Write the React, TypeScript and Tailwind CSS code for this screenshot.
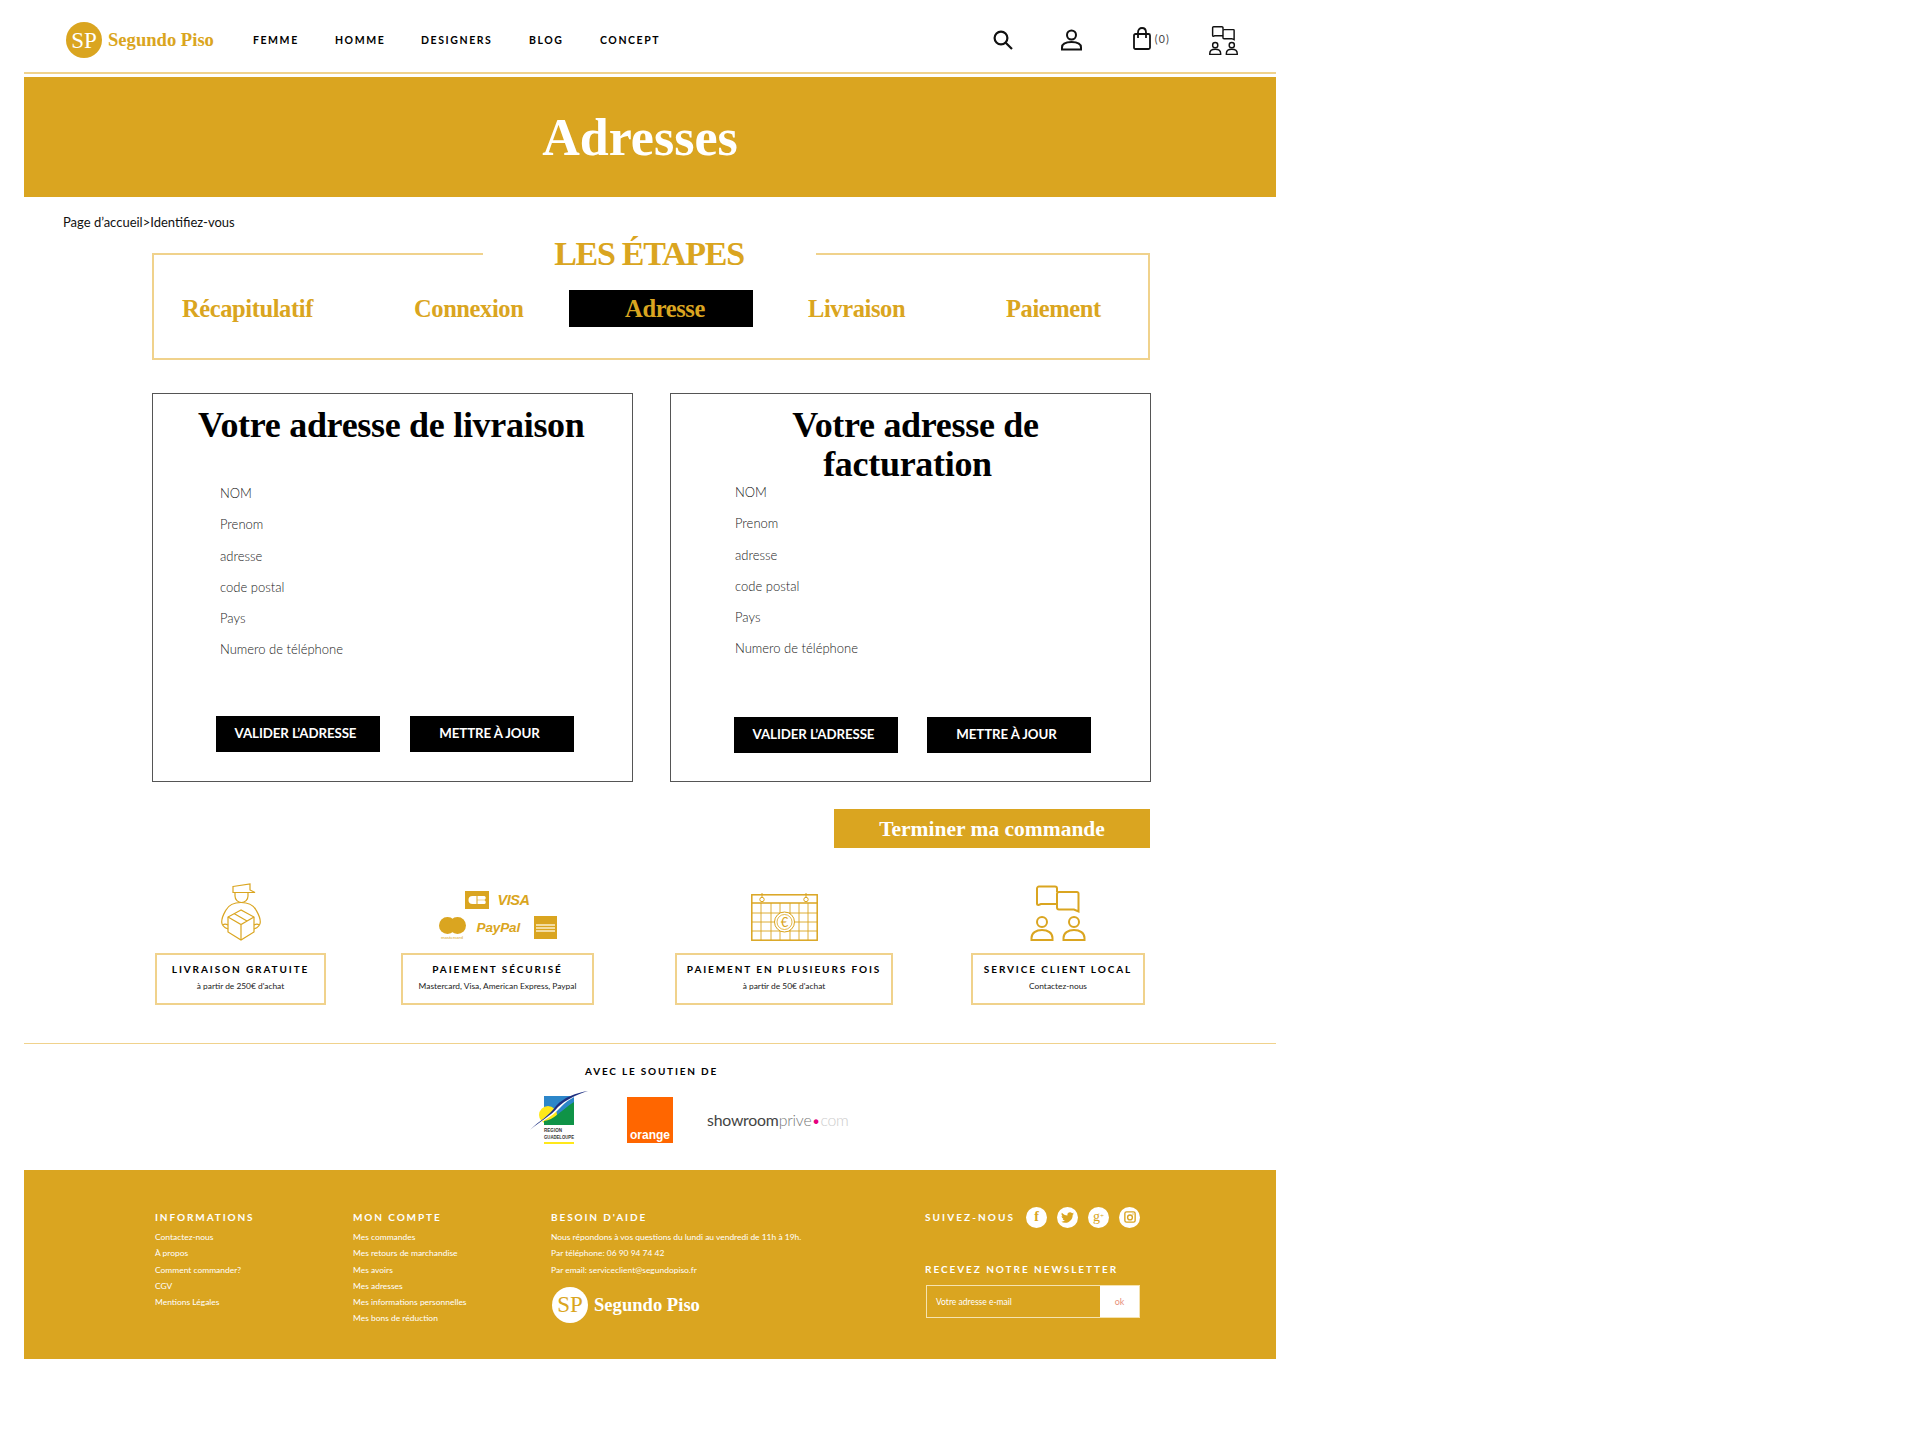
import React from "react";

const SERIF = "font-['Liberation_Serif',serif]";

function Logo({ light = false }: { light?: boolean }) {
  return (
    <div className="flex items-center gap-[6px]">
      <div className={`w-9 h-9 rounded-full flex items-center justify-center ${light ? "bg-white text-[#daa520]" : "bg-[#daa520] text-white"} ${SERIF} text-[23px] leading-none`}>
        SP
      </div>
      <span className={`${SERIF} font-bold text-[18.600px] leading-none pt-[1px] ${light ? "text-white" : "text-[#daa520]"}`}>Segundo Piso</span>
    </div>
  );
}

function PeopleIcon({ className, sw = 2 }: { className: string; sw?: number }) {
  return (
    <svg viewBox="0 0 56 56" fill="none" stroke="currentColor" strokeWidth={sw} className={className}>
      <path d="M27 7V3.5A2 2 0 0 0 25 1.5H9A2 2 0 0 0 7 3.5V18.5A1.5 1.5 0 0 0 8.5 20L11 19H27" />
      <path d="M29 7H47A1.5 1.5 0 0 1 48.5 8.5V26.5L44 24.5H29A2 2 0 0 1 27 22.5V9A2 2 0 0 1 29 7Z" />
      <circle cx="12" cy="37" r="5" />
      <circle cx="44" cy="37" r="5" />
      <path d="M1.5 55V53C1.500 48 6 45 12 45C18 45 22.500 48 22.500 53V55Z" />
      <path d="M33.500 55V53C33.500 48 38 45 44 45C50 45 54.500 48 54.500 53V55Z" />
    </svg>
  );
}

function SearchIcon() {
  return (
    <svg viewBox="0 0 20 20" fill="none" stroke="#111" strokeWidth="2.2" className="w-5 h-5">
      <circle cx="8" cy="8" r="6.400" />
      <path d="M12.500 12.500L19 19" />
    </svg>
  );
}

function UserIcon() {
  return (
    <svg viewBox="0 0 21 22" fill="none" stroke="#111" strokeWidth="2" className="w-[21px] h-[22px]">
      <circle cx="10.500" cy="6" r="4.500" />
      <path d="M1 20.500V18.500C1 15 4.500 13 10.500 13C16.500 13 20 15 20 18.500V20.500Z" />
    </svg>
  );
}

function BagIcon() {
  return (
    <svg viewBox="0 0 18 23" fill="none" stroke="#111" strokeWidth="1.800" className="w-[18px] h-[23px]">
      <rect x="1" y="7" width="16" height="15" rx="1.500" />
      <path d="M5 11V5.500C5 2.500 6.800 1 9 1C11.200 1 13 2.500 13 5.500V11" />
    </svg>
  );
}

function DeliveryIcon() {
  return (
    <svg viewBox="0 0 40 58" fill="none" stroke="#daa520" strokeWidth="1.200" className="w-10 h-[58px]">
      <path d="M12 3.500L29 1V7L34 9.500L12 9.500Z" />
      <path d="M14 9.500V13A6.500 6.500 0 0 0 27 13V9.500" />
      <path d="M7 46C3 44.500 .7 42 .7 39C.7 34 3 30.500 5 27C8 21.500 13 19.500 20 19.500C27 19.500 32 21.500 35 27C37 30.500 39.300 34 39.300 39C39.300 42 37 44.500 33 46" />
      <path d="M20 27L7 34V49L20 57L33 49V34Z" />
      <path d="M7 34L20 41.500L33 34M20 41.500V57M13 30.500L26 38" />
      <path d="M7 42C5 41 3 41 2 42M33 42C35 41 37 41 38 42" />
    </svg>
  );
}

function CalendarIcon() {
  return (
    <svg viewBox="0 0 67 48" fill="none" stroke="#daa520" strokeWidth="1" className="w-[67px] h-12">
      <rect x=".8" y="1.800" width="65.400" height="45.400" strokeWidth="1.500" />
      <path d="M.8 10H66.200" strokeWidth="1.500" />
      <path d="M10 10V47M20 10V47M29 10V47M39 10V47M48 10V47M57 10V47M1 20H66M1 29H66M1 38H66" strokeWidth=".9" />
      <circle cx="11" cy="6.500" r="2.200" fill="#fff" />
      <circle cx="55" cy="6.500" r="2.200" fill="#fff" />
      <path d="M11 0V4M55 0V4" />
      <circle cx="33.500" cy="29" r="10" fill="#fff" />
      <circle cx="33.500" cy="29" r="7.500" fill="#fff" strokeWidth=".8" />
      <text x="33.500" y="33.500" textAnchor="middle" fontSize="13" fill="#daa520" stroke="none" fontFamily="Lato, sans-serif">€</text>
    </svg>
  );
}

function PaymentIcons() {
  return (
    <div className="flex flex-col items-center h-[57px] w-[118px]">
      <div className="flex items-center gap-2 h-[18px]">
        <svg viewBox="0 0 24 18" className="w-6 h-[18px]">
          <rect width="24" height="18" fill="#daa520" />
          <path d="M11.500 5H7.500A4 4 0 0 0 7.500 13H11.500Z" fill="#fff" />
          <path d="M12.500 5H19.500A2 2 0 0 1 19.500 8.700H12.500ZM12.500 9.300H19.500A2 2 0 0 1 19.500 13H12.500Z" fill="#fff" />
        </svg>
        <span className="font-['Liberation_Sans',sans-serif] font-bold italic text-[14.500px] leading-none text-[#daa520] tracking-[-0.4px]">VISA</span>
      </div>
      <div className="flex items-start gap-[11px] h-[29px] mt-2 w-full">
        <div className="flex flex-col items-center w-[27px] flex-none">
          <div className="flex">
            <div className="w-[17px] h-[17px] rounded-full bg-[#daa520]" />
            <div className="w-[17px] h-[17px] rounded-full bg-[#daa520] -ml-[7px]" />
          </div>
          <span className="text-[4.500px] leading-[8px] text-[#daa520]">mastercard</span>
        </div>
        <span className="font-['Liberation_Sans',sans-serif] font-bold italic text-[13.500px] leading-none text-[#daa520] mt-[4px] tracking-[-0.1px]">PayPal</span>
        <div className="flex-none w-[23px] h-[23px] -mt-[1px] ml-[3px] bg-[#daa520] flex flex-col items-center justify-center gap-[1px]">
          <div className="w-[19px] h-[2px] bg-[#f3dca0]" />
          <div className="w-[19px] h-[2px] bg-[#f3dca0]" />
          <div className="w-[19px] h-[2px] bg-[#f3dca0]" />
        </div>
      </div>
    </div>
  );
}

function RegionLogo() {
  return (
    <svg viewBox="0 0 58 54" className="w-[58px] h-[54px]">
      <rect x="14" y="5" width="30" height="29" fill="#2c86c9" />
      <circle cx="18" cy="24" r="9" fill="#ffe81a" />
      <path d="M44 11V34H14V30C24 29 30 20 44 11Z" fill="#0f9347" />
      <path d="M0 39C10 29 18 26 26 16C34 7 46 2 58 0C44 5 36 10 29 18C22 26 10 31 0 39Z" fill="#fff" />
      <path d="M0 39C10 29 18 26 26 15C34 6 46 2 58 0C45 4 36 9 28 16C21 25 10 30 0 39Z" fill="#1d2f80" />
      <text x="14" y="41" fontSize="5.500" fontFamily="Liberation Sans, sans-serif" fontWeight="bold" fill="#333" textLength="18" lengthAdjust="spacingAndGlyphs">REGION</text>
      <text x="14" y="48" fontSize="5.500" fontFamily="Liberation Sans, sans-serif" fontWeight="bold" fill="#333" textLength="30" lengthAdjust="spacingAndGlyphs">GUADELOUPE</text>
      <rect x="14" y="51" width="30" height="2" fill="#ffe81a" />
    </svg>
  );
}

function AddressCard({ title, fieldsClass, buttonsClass, titleClass }: { title: [string, string][]; fieldsClass: string; buttonsClass: string; titleClass: string }) {
  const fields = ["NOM", "Prenom", "adresse", "code postal", "Pays", "Numero de téléphone"];
  return (
    <section className="w-[481px] h-[389px] border border-[#555] bg-white flex flex-col">
      <h2 className={`${SERIF} ${titleClass} font-bold text-black text-[36px] leading-[39px] tracking-[-0.3px]`}>
        {title.map(([t, c]) => (
          <div key={t} className={c}>{t}</div>
        ))}
      </h2>
      <ul className={fieldsClass}>
        {fields.map((f) => (
          <li key={f} className="h-[31.3px] leading-[31.3px] text-[13px] font-light text-[#222]">
            {f}
          </li>
        ))}
      </ul>
      <div className={buttonsClass}>
        <button className="w-[164px] h-[36px] bg-black text-white font-bold text-[13.300px] tracking-[-0.1px] pr-[5px] pt-[1px]">VALIDER L’ADRESSE</button>
        <button className="w-[164px] h-[36px] bg-black text-white font-bold text-[13.300px] tracking-[-0.1px] pr-[5px] pt-[1px]">METTRE À JOUR</button>
      </div>
    </section>
  );
}

function Feature({ width, title, sub, icon }: { width: string; title: string; sub: string; icon: React.ReactNode }) {
  return (
    <div className={`${width} flex flex-col`}>
      <div className="h-[70px] flex justify-center">{icon}</div>
      <div className="h-[52px] border-2 border-[#f0d28c] flex flex-col items-center pt-[6px]">
        <div className="text-[10px] leading-[16px] font-bold tracking-[1.900px] text-black">{title}</div>
        <div className="text-[8.400px] leading-[16px] text-[#222] mt-[1px]">{sub}</div>
      </div>
    </div>
  );
}

function FooterCol({ width, title, items }: { width: string; title: string; items: string[] }) {
  return (
    <div className={width}>
      <h3 className="text-[10px] leading-4 font-bold tracking-[1.900px] text-white">{title}</h3>
      <ul className="mt-1">
        {items.map((i) => (
          <li key={i} className="text-[8.450px] leading-[16.300px] text-white">
            {i}
          </li>
        ))}
      </ul>
    </div>
  );
}

function Social({ children }: { children: React.ReactNode }) {
  return <div className="w-[21px] h-[21px] rounded-full bg-white text-[#daa520] flex items-center justify-center">{children}</div>;
}

export default function App() {
  const nav = [
    ["FEMME", "w-[44px] mr-[38px]"],
    ["HOMME", "w-[49px] mr-[37px]"],
    ["DESIGNERS", "w-[70px] mr-[38px]"],
    ["BLOG", "w-[34px] mr-[37px]"],
    ["CONCEPT", "w-[59px]"],
  ];
  const stepText = `${SERIF} font-bold text-[24.500px] tracking-[-0.4px] text-[#daa520]`;
  return (
    <div className="w-[1920px] min-h-[1445px] bg-white font-['Lato',sans-serif]">
      <div className="ml-6 w-[1252px]">
        <header className="h-[72px] flex items-center pl-[42px] pt-2">
          <Logo />
          <nav className="flex ml-[39px] pt-[2px]">
            {nav.map(([n, c]) => (
              <a key={n} className={`${c} text-[10.500px] font-bold tracking-[1.600px] text-black whitespace-nowrap`}>
                {n}
              </a>
            ))}
          </nav>
          <div className="ml-auto flex items-center pr-[38px] text-[#111]">
            <SearchIcon />
            <div className="ml-[48px]"><UserIcon /></div>
            <div className="ml-[51px] flex items-center">
              <div className="-mt-[3px]"><BagIcon /></div>
              <span className="ml-1 text-[10.500px] tracking-[1.200px] text-[#444]">(0)</span>
            </div>
            <div className="ml-[39px] mt-[1px]"><PeopleIcon className="w-[29px] h-[29px] text-[#111]" sw={2.800} /></div>
          </div>
        </header>
        <div className="h-[2px] bg-[#f0d28c]" />
        <div className="mt-[3px] h-[120px] bg-[#daa520] flex items-center justify-center pr-5">
          <h1 className={`${SERIF} font-bold text-white text-[52px] leading-none pt-[2px]`}>Adresses</h1>
        </div>
        <p className="mt-[15px] ml-[39px] h-5 text-[13px] leading-5 text-[#111]">Page d’accueil&gt;Identifiez-vous</p>

        <fieldset className="mt-[2px] ml-[128px] w-[998px] h-[126px] border-2 border-[#f0d28c] px-0">
          <legend className="ml-[329px] w-[333px] h-10 p-0">
            <div className={`${SERIF} text-center font-bold text-[#daa520] text-[34px] tracking-[-1.300px] leading-10 pr-[1px]`}>LES ÉTAPES</div>
          </legend>
          <div className="flex items-center h-[37px] mt-[16px]">
            <div className={`${stepText} w-[260px] pl-[28px] pt-[2px]`}>Récapitulatif</div>
            <div className={`${stepText} w-[155px] pt-[2px]`}>Connexion</div>
            <div className={`${stepText} w-[184px] h-[37px] bg-black flex items-center justify-center leading-none pl-2 pt-[2px]`}>Adresse</div>
            <div className={`${stepText} w-[253px] pl-[55px] pt-[2px]`}>Livraison</div>
            <div className={`${stepText} pt-[2px]`}>Paiement</div>
          </div>
        </fieldset>

        <div className="mt-[33px] ml-[128px] flex gap-[37px]">
          <AddressCard
            title={[["Votre adresse de livraison", ""]]}
            titleClass="pl-[45px] pt-[12px]"
            fieldsClass="pl-[67px] mt-[33px]"
            buttonsClass="flex gap-[30px] pl-[63px] mt-[50px]"
          />
          <AddressCard
            title={[["Votre adresse de", "pl-[10px]"], ["facturation", "pr-[6px]"]]}
            titleClass="text-center pt-[12px]"
            fieldsClass="pl-[64px] -mt-[7px]"
            buttonsClass="flex gap-[29px] pl-[63px] mt-[52px]"
          />
        </div>

        <div className="mt-[27px] ml-[128px] w-[998px] flex justify-end">
          <button className={`${SERIF} w-[316px] h-[39px] bg-[#daa520] text-white font-bold text-[21.500px] leading-none pt-[2px]`}>Terminer ma commande</button>
        </div>

        <div className="mt-[35px] ml-[131px] flex">
          <Feature width="w-[171px]" title="LIVRAISON GRATUITE" sub="à partir de 250€ d'achat" icon={<DeliveryIcon />} />
          <div className="ml-[75px]">
            <Feature width="w-[193px]" title="PAIEMENT SÉCURISÉ" sub="Mastercard, Visa, American Express, Paypal" icon={<div className="pt-2"><PaymentIcons /></div>} />
          </div>
          <div className="ml-[81px]">
            <Feature width="w-[218px]" title="PAIEMENT EN PLUSIEURS FOIS" sub="à partir de 50€ d'achat" icon={<div className="pt-[10px]"><CalendarIcon /></div>} />
          </div>
          <div className="ml-[78px]">
            <Feature width="w-[174px]" title="SERVICE CLIENT LOCAL" sub="Contactez-nous" icon={<div className="pt-[2px]"><PeopleIcon className="w-[56px] h-[56px] text-[#daa520]" /></div>} />
          </div>
        </div>

        <div className="mt-[38px] h-[1px] bg-[#f0d28c]" />

        <div className="h-[126px]">
          <div className="pt-[19px] pl-[561px] text-[10px] leading-4 font-bold tracking-[1.800px] text-black">AVEC LE SOUTIEN DE</div>
          <div className="flex items-start pl-[506px] mt-[12px]">
            <RegionLogo />
            <div className="ml-[39px] mt-[6px] w-[46px] h-[46px] bg-[#ff6600] flex items-end justify-center">
              <span className="font-['Liberation_Sans',sans-serif] font-bold text-[12px] leading-[15px] text-white">orange</span>
            </div>
            <div className="ml-[34px] mt-[19px] text-[15.800px] leading-5 font-light tracking-[-0.2px] whitespace-nowrap">
              <span className="text-[#444] font-normal">showroom</span>
              <span className="text-[#777]">prive</span>
              <span className="text-[#e6007e]">•</span>
              <span className="text-[#ccc]">com</span>
            </div>
          </div>
        </div>

        <footer className="h-[189px] bg-[#daa520] pl-[131px] pt-[39px] flex">
          <FooterCol width="w-[198px]" title="INFORMATIONS" items={["Contactez-nous", "À propos", "Comment commander?", "CGV", "Mentions Légales"]} />
          <FooterCol width="w-[198px]" title="MON COMPTE" items={["Mes commandes", "Mes retours de marchandise", "Mes avoirs", "Mes adresses", "Mes informations personnelles", "Mes bons de réduction"]} />
          <div className="w-[374px]">
            <FooterCol width="w-full" title="BESOIN D'AIDE" items={["Nous répondons à vos questions du lundi au vendredi de 11h à 19h.", "Par téléphone: 06 90 94 74 42", "Par email: serviceclient@segundopiso.fr"]} />
            <div className="mt-[9px] ml-px"><Logo light /></div>
          </div>
          <div className="w-[215px]">
            <div className="flex items-center h-4">
              <h3 className="w-[102px] text-[10px] leading-4 font-bold tracking-[2.100px] text-white">SUIVEZ-NOUS</h3>
              <div className="flex gap-[10px]">
                <Social><span className={`${SERIF} font-bold text-[14px] leading-none`}>f</span></Social>
                <Social>
                  <svg viewBox="0 0 24 24" className="w-[13px] h-[13px]" fill="currentColor"><path d="M23.950 4.570a10 10 0 0 1-2.820.770 4.960 4.960 0 0 0 2.160-2.720c-.950.550-2 .960-3.130 1.190a4.920 4.920 0 0 0-8.380 4.480C7.690 8.100 4.070 6.130 1.640 3.160a4.820 4.820 0 0 0-.660 2.470c0 1.710.870 3.210 2.190 4.100a4.900 4.900 0 0 1-2.230-.620v.060a4.920 4.920 0 0 0 3.950 4.830c-.720.190-1.480.220-2.220.080a4.930 4.930 0 0 0 4.600 3.420A9.870 9.870 0 0 1 0 19.540a14 14 0 0 0 7.560 2.210c9.050 0 14-7.500 14-13.980l-.010-.640a10 10 0 0 0 2.400-2.560z" /></svg>
                </Social>
                <Social><span className={`${SERIF} text-[14px] leading-none`}>g<sup className="text-[7px]">+</sup></span></Social>
                <Social>
                  <svg viewBox="0 0 14 14" className="w-[12px] h-[12px]" fill="none" stroke="currentColor" strokeWidth="1.600"><rect x="1" y="1" width="12" height="12" rx="2" /><circle cx="7" cy="7.500" r="2.800" /><path d="M10 3.500h1" /></svg>
                </Social>
              </div>
            </div>
            <h3 className="mt-[36px] text-[10px] leading-4 font-bold tracking-[1.950px] text-white whitespace-nowrap">RECEVEZ NOTRE NEWSLETTER</h3>
            <div className="mt-2 ml-px w-[214px] h-[33px] flex border border-[#f5e3b0]">
              <div className="flex-1 pl-[9px] pt-[1px] text-[8.500px] leading-[31px] text-white">Votre adresse e-mail</div>
              <div className="w-[39px] bg-white text-center text-[9px] leading-[31px] text-[#e8907a]">ok</div>
            </div>
          </div>
        </footer>
      </div>
    </div>
  );
}
